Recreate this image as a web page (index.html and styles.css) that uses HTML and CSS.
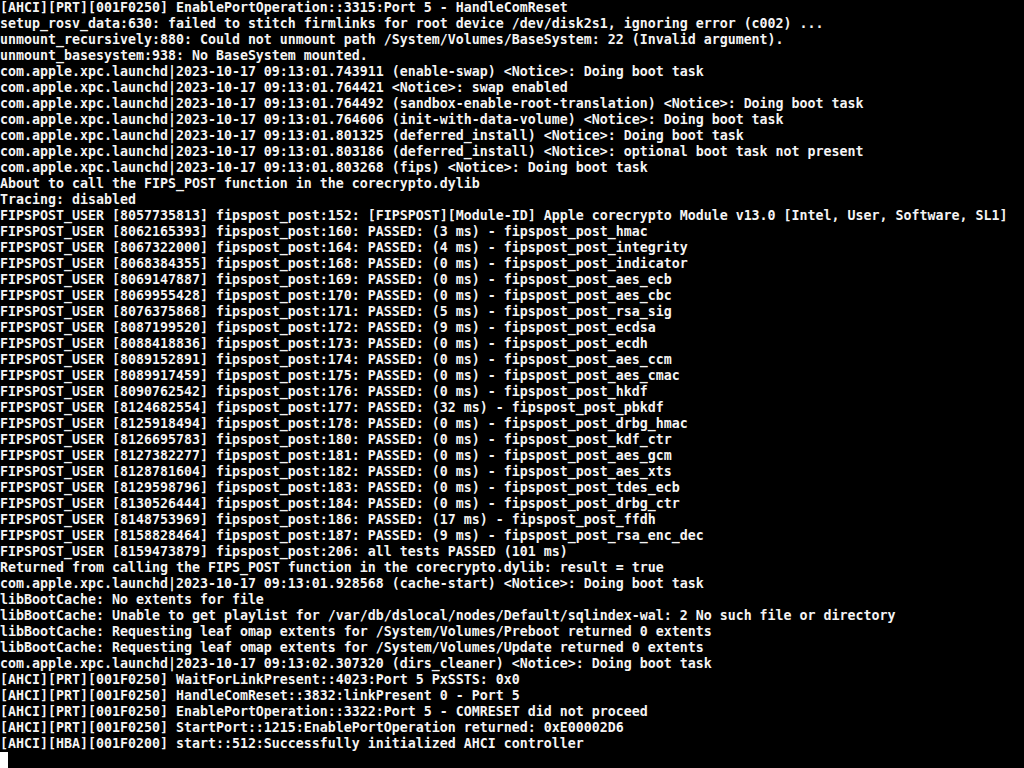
FILE: index.html
```html
<!DOCTYPE html>
<html>
<head>
<meta charset="utf-8">
<link rel="stylesheet" href="styles.css">
</head>
<body>
<div class="console">
<div class="line">[AHCI][PRT][001F0250] EnablePortOperation::3315:Port 5 - HandleComReset</div>
<div class="line">setup_rosv_data:630: failed to stitch firmlinks for root device /dev/disk2s1, ignoring error (c002) ...</div>
<div class="line">unmount_recursively:880: Could not unmount path /System/Volumes/BaseSystem: 22 (Invalid argument).</div>
<div class="line">unmount_basesystem:938: No BaseSystem mounted.</div>
<div class="line">com.apple.xpc.launchd|2023-10-17 09:13:01.743911 (enable-swap) &lt;Notice&gt;: Doing boot task</div>
<div class="line">com.apple.xpc.launchd|2023-10-17 09:13:01.764421 &lt;Notice&gt;: swap enabled</div>
<div class="line">com.apple.xpc.launchd|2023-10-17 09:13:01.764492 (sandbox-enable-root-translation) &lt;Notice&gt;: Doing boot task</div>
<div class="line">com.apple.xpc.launchd|2023-10-17 09:13:01.764606 (init-with-data-volume) &lt;Notice&gt;: Doing boot task</div>
<div class="line">com.apple.xpc.launchd|2023-10-17 09:13:01.801325 (deferred_install) &lt;Notice&gt;: Doing boot task</div>
<div class="line">com.apple.xpc.launchd|2023-10-17 09:13:01.803186 (deferred_install) &lt;Notice&gt;: optional boot task not present</div>
<div class="line">com.apple.xpc.launchd|2023-10-17 09:13:01.803268 (fips) &lt;Notice&gt;: Doing boot task</div>
<div class="line">About to call the FIPS_POST function in the corecrypto.dylib</div>
<div class="line">Tracing: disabled</div>
<div class="line">FIPSPOST_USER [8057735813] fipspost_post:152: [FIPSPOST][Module-ID] Apple corecrypto Module v13.0 [Intel, User, Software, SL1]</div>
<div class="line">FIPSPOST_USER [8062165393] fipspost_post:160: PASSED: (3 ms) - fipspost_post_hmac</div>
<div class="line">FIPSPOST_USER [8067322000] fipspost_post:164: PASSED: (4 ms) - fipspost_post_integrity</div>
<div class="line">FIPSPOST_USER [8068384355] fipspost_post:168: PASSED: (0 ms) - fipspost_post_indicator</div>
<div class="line">FIPSPOST_USER [8069147887] fipspost_post:169: PASSED: (0 ms) - fipspost_post_aes_ecb</div>
<div class="line">FIPSPOST_USER [8069955428] fipspost_post:170: PASSED: (0 ms) - fipspost_post_aes_cbc</div>
<div class="line">FIPSPOST_USER [8076375868] fipspost_post:171: PASSED: (5 ms) - fipspost_post_rsa_sig</div>
<div class="line">FIPSPOST_USER [8087199520] fipspost_post:172: PASSED: (9 ms) - fipspost_post_ecdsa</div>
<div class="line">FIPSPOST_USER [8088418836] fipspost_post:173: PASSED: (0 ms) - fipspost_post_ecdh</div>
<div class="line">FIPSPOST_USER [8089152891] fipspost_post:174: PASSED: (0 ms) - fipspost_post_aes_ccm</div>
<div class="line">FIPSPOST_USER [8089917459] fipspost_post:175: PASSED: (0 ms) - fipspost_post_aes_cmac</div>
<div class="line">FIPSPOST_USER [8090762542] fipspost_post:176: PASSED: (0 ms) - fipspost_post_hkdf</div>
<div class="line">FIPSPOST_USER [8124682554] fipspost_post:177: PASSED: (32 ms) - fipspost_post_pbkdf</div>
<div class="line">FIPSPOST_USER [8125918494] fipspost_post:178: PASSED: (0 ms) - fipspost_post_drbg_hmac</div>
<div class="line">FIPSPOST_USER [8126695783] fipspost_post:180: PASSED: (0 ms) - fipspost_post_kdf_ctr</div>
<div class="line">FIPSPOST_USER [8127382277] fipspost_post:181: PASSED: (0 ms) - fipspost_post_aes_gcm</div>
<div class="line">FIPSPOST_USER [8128781604] fipspost_post:182: PASSED: (0 ms) - fipspost_post_aes_xts</div>
<div class="line">FIPSPOST_USER [8129598796] fipspost_post:183: PASSED: (0 ms) - fipspost_post_tdes_ecb</div>
<div class="line">FIPSPOST_USER [8130526444] fipspost_post:184: PASSED: (0 ms) - fipspost_post_drbg_ctr</div>
<div class="line">FIPSPOST_USER [8148753969] fipspost_post:186: PASSED: (17 ms) - fipspost_post_ffdh</div>
<div class="line">FIPSPOST_USER [8158828464] fipspost_post:187: PASSED: (9 ms) - fipspost_post_rsa_enc_dec</div>
<div class="line">FIPSPOST_USER [8159473879] fipspost_post:206: all tests PASSED (101 ms)</div>
<div class="line">Returned from calling the FIPS_POST function in the corecrypto.dylib: result = true</div>
<div class="line">com.apple.xpc.launchd|2023-10-17 09:13:01.928568 (cache-start) &lt;Notice&gt;: Doing boot task</div>
<div class="line">libBootCache: No extents for file</div>
<div class="line">libBootCache: Unable to get playlist for /var/db/dslocal/nodes/Default/sqlindex-wal: 2 No such file or directory</div>
<div class="line">libBootCache: Requesting leaf omap extents for /System/Volumes/Preboot returned 0 extents</div>
<div class="line">libBootCache: Requesting leaf omap extents for /System/Volumes/Update returned 0 extents</div>
<div class="line">com.apple.xpc.launchd|2023-10-17 09:13:02.307320 (dirs_cleaner) &lt;Notice&gt;: Doing boot task</div>
<div class="line">[AHCI][PRT][001F0250] WaitForLinkPresent::4023:Port 5 PxSSTS: 0x0</div>
<div class="line">[AHCI][PRT][001F0250] HandleComReset::3832:linkPresent 0 - Port 5</div>
<div class="line">[AHCI][PRT][001F0250] EnablePortOperation::3322:Port 5 - COMRESET did not proceed</div>
<div class="line">[AHCI][PRT][001F0250] StartPort::1215:EnablePortOperation returned: 0xE00002D6</div>
<div class="line">[AHCI][HBA][001F0200] start::512:Successfully initialized AHCI controller</div>
<div class="line"><span class="cursor"></span></div>
</div>
</body>
</html>
```

FILE: styles.css
```css
html, body {
  margin: 0;
  padding: 0;
  background: #000;
  height: 100%;
  overflow: hidden;
}

.console {
  font-family: "DejaVu Sans Mono", monospace;
  font-weight: bold;
  font-size: 13.29px;
  line-height: 16px;
  color: #f4f4f4;
}

.line {
  height: 16px;
  white-space: pre;
  overflow: hidden;
}

.cursor {
  display: inline-block;
  width: 8px;
  height: 16px;
  background: #fff;
  vertical-align: top;
}
```
